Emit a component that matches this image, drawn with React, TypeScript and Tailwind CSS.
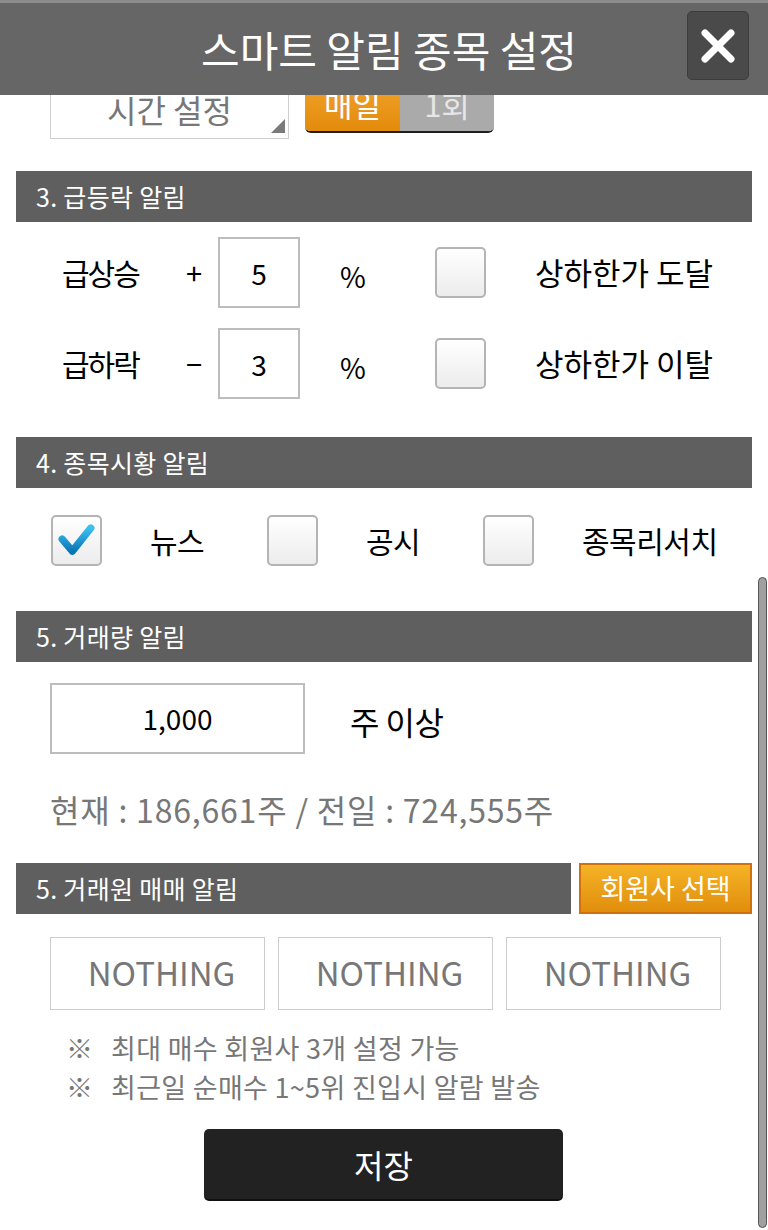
import React from "react"

const Checkbox = ({ checked }: { checked?: boolean }) => (
  <div className="w-[51px] h-[51px] shrink-0 rounded-[5px] border-2 border-[#b4b4b4] bg-gradient-to-b from-white to-[#ececec] flex items-center justify-center">
    {checked && (
      <svg width="51" height="51" viewBox="0 0 51 51">
        <defs>
          <linearGradient id="chk" x1="0" y1="0" x2="0" y2="1">
            <stop offset="0" stopColor="#3cc0ee" />
            <stop offset="1" stopColor="#0a76b8" />
          </linearGradient>
        </defs>
        <path d="M10 24 L21 37 L41 12" fill="none" stroke="url(#chk)" strokeWidth="8" strokeLinecap="round" strokeLinejoin="round" />
      </svg>
    )}
  </div>
)

const SectionBar = ({ title }: { title: string }) => (
  <div className="h-[51px] bg-[#5f5f5f] flex items-center pl-5 text-white text-[25px] tracking-[0.3px] whitespace-nowrap">{title}</div>
)

export default function App() {
  return (
    <div className="relative w-[768px] h-[1230px] overflow-hidden bg-white text-black font-[family-name:'Noto_Sans_CJK_KR',sans-serif]">
      {/* fixed header over the scrolled content */}
      <div className="absolute top-0 left-0 right-0 h-[95px] z-10 bg-[#666666] border-t-[3px] border-[#8c8c8c] flex items-center justify-center">
        <p className="text-white text-[42px] ml-[10px] -mt-[2px] whitespace-nowrap">스마트 알림 종목 설정</p>
        <button className="absolute right-[19px] top-[8px] w-[62px] h-[69px] rounded-[5px] bg-[#4a4a4a] border border-[#3c3c3c] flex items-center justify-center">
          <svg width="36" height="36" viewBox="0 0 36 36">
            <path d="M5 5 L31 31 M31 5 L5 31" stroke="#fff" strokeWidth="7" strokeLinecap="round" />
          </svg>
        </button>
      </div>

      <div className="pt-[79px]">
        {/* 2. 시간 설정 (scrolled under header) */}
        <div className="flex items-end pl-[50px] h-[60px]">
          <div className="relative w-[239px] h-[60px] border border-[#cfcfcf] flex items-center justify-center text-[32px] text-[#777] whitespace-nowrap">
            시간 설정
            <div className="absolute right-[3px] bottom-[5px] w-0 h-0 border-l-[14px] border-l-transparent border-b-[14px] border-b-[#7a7a7a]" />
          </div>
          <div className="ml-[16px] mb-[6px] flex h-[56px] w-[189px] rounded-b-[6px] overflow-hidden border-b-[2px] border-[#1e1e1e]">
            <div className="w-[95px] bg-gradient-to-b from-[#f2a52a] to-[#e38b0a] text-white text-[31px] flex items-center justify-center">매일</div>
            <div className="flex-1 bg-[#aaaaaa] text-[#e6e6e6] text-[31px] flex items-center justify-center">1회</div>
          </div>
        </div>

        {/* 3 */}
        <div className="mt-[32px] mx-[16px]">
          <SectionBar title="3. 급등락 알림" />
        </div>
        <div className="mt-[15px] flex flex-col gap-[20px] text-[30px] whitespace-nowrap">
          {[
            { label: "급상승", sign: "+", value: "5", text: "상하한가 도달" },
            { label: "급하락", sign: "−", value: "3", text: "상하한가 이탈" },
          ].map((row, i) => (
            <div key={i} className="flex items-center h-[71px] pl-[62px]">
              <span className="w-[124px] tracking-[-2px]">{row.label}</span>
              <span className="w-[32px] text-[29px]">{row.sign}</span>
              <div className="w-[82px] h-[71px] border-2 border-[#bdbdbd] flex items-center justify-center text-[28px]">{row.value}</div>
              <span className="ml-[40px] w-[95px] text-[28px] mt-[6px]">%</span>
              <Checkbox />
              <span className="ml-[49px] text-[31px]">{row.text}</span>
            </div>
          ))}
        </div>

        {/* 4 */}
        <div className="mt-[38px] mx-[16px]">
          <SectionBar title="4. 종목시황 알림" />
        </div>
        <div className="mt-[27px] flex pl-[51px] text-[30px] tracking-[-0.5px] whitespace-nowrap">
          {[
            { t: "뉴스", c: true },
            { t: "공시", c: false },
            { t: "종목리서치", c: false },
          ].map((it, i) => (
            <div key={i} className="w-[216px] shrink-0 flex items-center">
              <Checkbox checked={it.c} />
              <span className="ml-[48px]">{it.t}</span>
            </div>
          ))}
        </div>

        {/* 5 거래량 */}
        <div className="mt-[45px] mx-[16px]">
          <SectionBar title="5. 거래량 알림" />
        </div>
        <div className="mt-[21px] flex items-center pl-[50px] whitespace-nowrap">
          <div className="w-[255px] h-[71px] border-2 border-[#bdbdbd] flex items-center justify-center text-[28px] pb-[2px]">1,000</div>
          <span className="ml-[45px] text-[32px] tracking-[-0.5px] mt-[4px]">주 이상</span>
        </div>
        <p className="mt-[33px] pl-[50px] text-[32px] text-[#777] tracking-[0.8px] leading-[44px] whitespace-nowrap">현재 : 186,661주 / 전일 : 724,555주</p>

        {/* 5 거래원 */}
        <div className="mt-[32px] mx-[16px] flex gap-[8px]">
          <div className="flex-1">
            <SectionBar title="5. 거래원 매매 알림" />
          </div>
          <button className="w-[173px] h-[51px] bg-gradient-to-b from-[#f5b325] to-[#e08e0c] border-2 border-[#d0700e] text-white text-[27px] flex items-center justify-center whitespace-nowrap">
            회원사 선택
          </button>
        </div>
        <div className="mt-[23px] flex gap-[13px] pl-[50px]">
          {["NOTHING", "NOTHING", "NOTHING"].map((t, i) => (
            <div key={i} className="w-[215px] h-[73px] border border-[#cccccc] flex items-center justify-center text-[33px] text-[#777] pl-[8px] pb-[2px]">
              {t}
            </div>
          ))}
        </div>
        <div className="mt-[18px] pl-[66px] text-[27px] text-[#777] tracking-[0.3px] leading-[39px] whitespace-nowrap">
          <div className="flex">
            <span className="w-[45px]">※</span>
            <span>최대 매수 회원사 3개 설정 가능</span>
          </div>
          <div className="flex">
            <span className="w-[45px]">※</span>
            <span>최근일 순매수 1~5위 진입시 알람 발송</span>
          </div>
        </div>
        <div className="mt-[23px] pl-[204px]">
          <button className="w-[359px] h-[72px] rounded-[5px] bg-[#222222] border-b-2 border-[#111] text-white text-[32px] flex items-center justify-center">
            저장
          </button>
        </div>
      </div>

      {/* scrollbar */}
      <div className="absolute left-[758px] top-[577px] w-[9px] h-[651px] rounded-full bg-[#a0a0a0] border border-[#555]" />
    </div>
  )
}
